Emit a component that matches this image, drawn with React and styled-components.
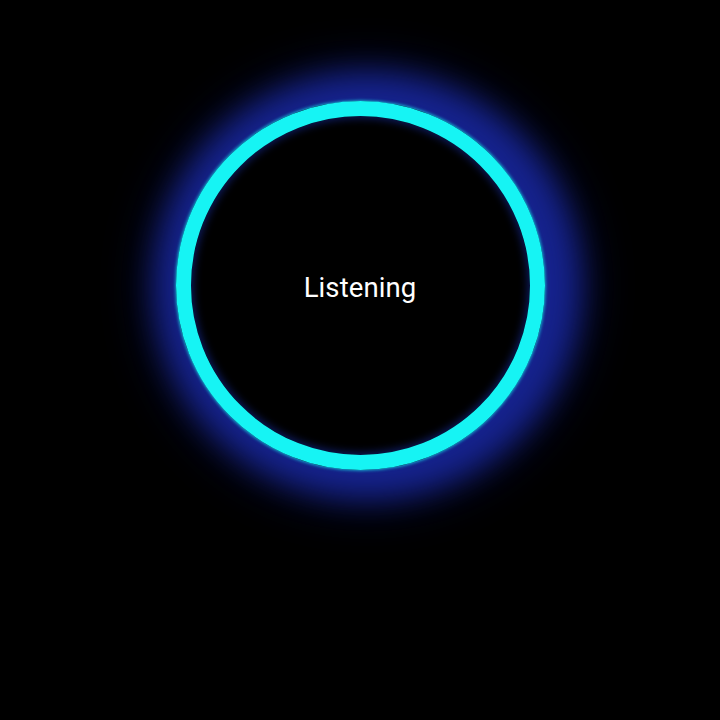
import React from 'react';
import styled, { createGlobalStyle } from 'styled-components';

const GlobalStyle = createGlobalStyle`
  html, body {
    margin: 0;
    padding: 0;
    background: #000;
  }
`;

// pantalla principal
const Screen = styled.main`
  width: 720px;
  height: 720px;
  background: #000;
  display: flex;
  justify-content: center;
  align-items: flex-start;
  padding-top: 101px;
  box-sizing: border-box;
  overflow: hidden;
`;

const Ring = styled.div`
  width: ${({ size }) => size}px;
  height: ${({ size }) => size}px;
  box-sizing: border-box;
  border-radius: 50%;
  border: 15px solid #16f4f4;
  display: flex;
  align-items: center;
  justify-content: center;
  box-shadow:
    0 0 3px 1px rgba(22, 244, 244, 0.6),
    inset 0 0 8px 2px rgba(20, 40, 140, 0.7),
    7px 0 30px 26px #16238e,
    7px 0 50px 32px rgba(20, 32, 130, 0.55);
`;

const Label = styled.span`
  font-family: Roboto, "Liberation Sans", sans-serif;
  font-size: 27.5px;
  color: #fff;
  letter-spacing: 0.1px;
  margin-top: 3px;
`;

export default function App() {
  return (
    <>
      <GlobalStyle />
      <Screen>
        <Ring size={369}>
          <Label>Listening</Label>
        </Ring>
      </Screen>
    </>
  );
}
